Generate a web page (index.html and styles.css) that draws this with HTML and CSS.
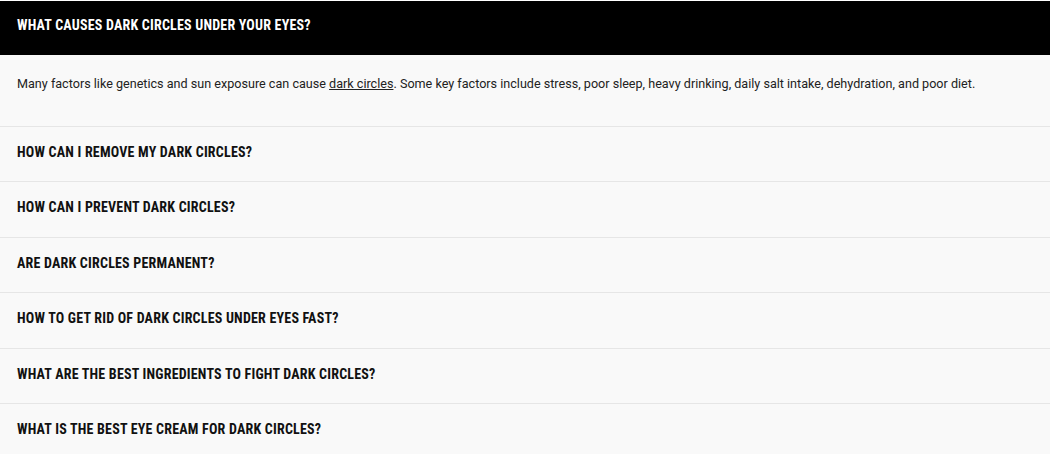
FILE: index.html
```html
<!DOCTYPE html>
<html>
<head>
<meta charset="utf-8">
<link rel="stylesheet" href="styles.css">
</head>
<body>
<div class="faq">
  <div class="item open">
    <div class="q">WHAT CAUSES DARK CIRCLES UNDER YOUR EYES?</div>
    <div class="a">Many factors like genetics and sun exposure can cause <a href="#">dark circles</a>. Some key factors include stress, poor sleep, heavy drinking, daily salt intake, dehydration, and poor diet.</div>
  </div>
  <div class="item"><div class="q">HOW CAN I REMOVE MY DARK CIRCLES?</div></div>
  <div class="item"><div class="q">HOW CAN I PREVENT DARK CIRCLES?</div></div>
  <div class="item"><div class="q">ARE DARK CIRCLES PERMANENT?</div></div>
  <div class="item"><div class="q">HOW TO GET RID OF DARK CIRCLES UNDER EYES FAST?</div></div>
  <div class="item"><div class="q">WHAT ARE THE BEST INGREDIENTS TO FIGHT DARK CIRCLES?</div></div>
  <div class="item"><div class="q">WHAT IS THE BEST EYE CREAM FOR DARK CIRCLES?</div></div>
</div>
</body>
</html>
```
FILE: styles.css
```css
html, body {
  margin: 0;
  padding: 0;
  background: #f9f9f9;
}
.faq {
  padding-top: 1px;
  background: #fff;
}
.item {
  background: #f9f9f9;
  border-bottom: 1px solid #e6e6e6;
}
.q {
  font-family: "Roboto Condensed", "Liberation Sans Narrow", "Roboto", sans-serif;
  font-weight: 700;
  font-size: 14px;
  color: #111;
  height: 54.4px;
  line-height: 51px;
  padding: 0 17px;
  letter-spacing: 0.2px;
}
.open .q {
  background: #000;
  color: #fff;
  height: 54px;
  line-height: 49px;
}
.a {
  font-family: "Roboto", sans-serif;
  font-size: 12.6px;
  color: #222;
  padding: 20px 17px 33px;
  line-height: 18px;
}
.a a {
  color: #222;
  text-decoration: underline;
}
```
